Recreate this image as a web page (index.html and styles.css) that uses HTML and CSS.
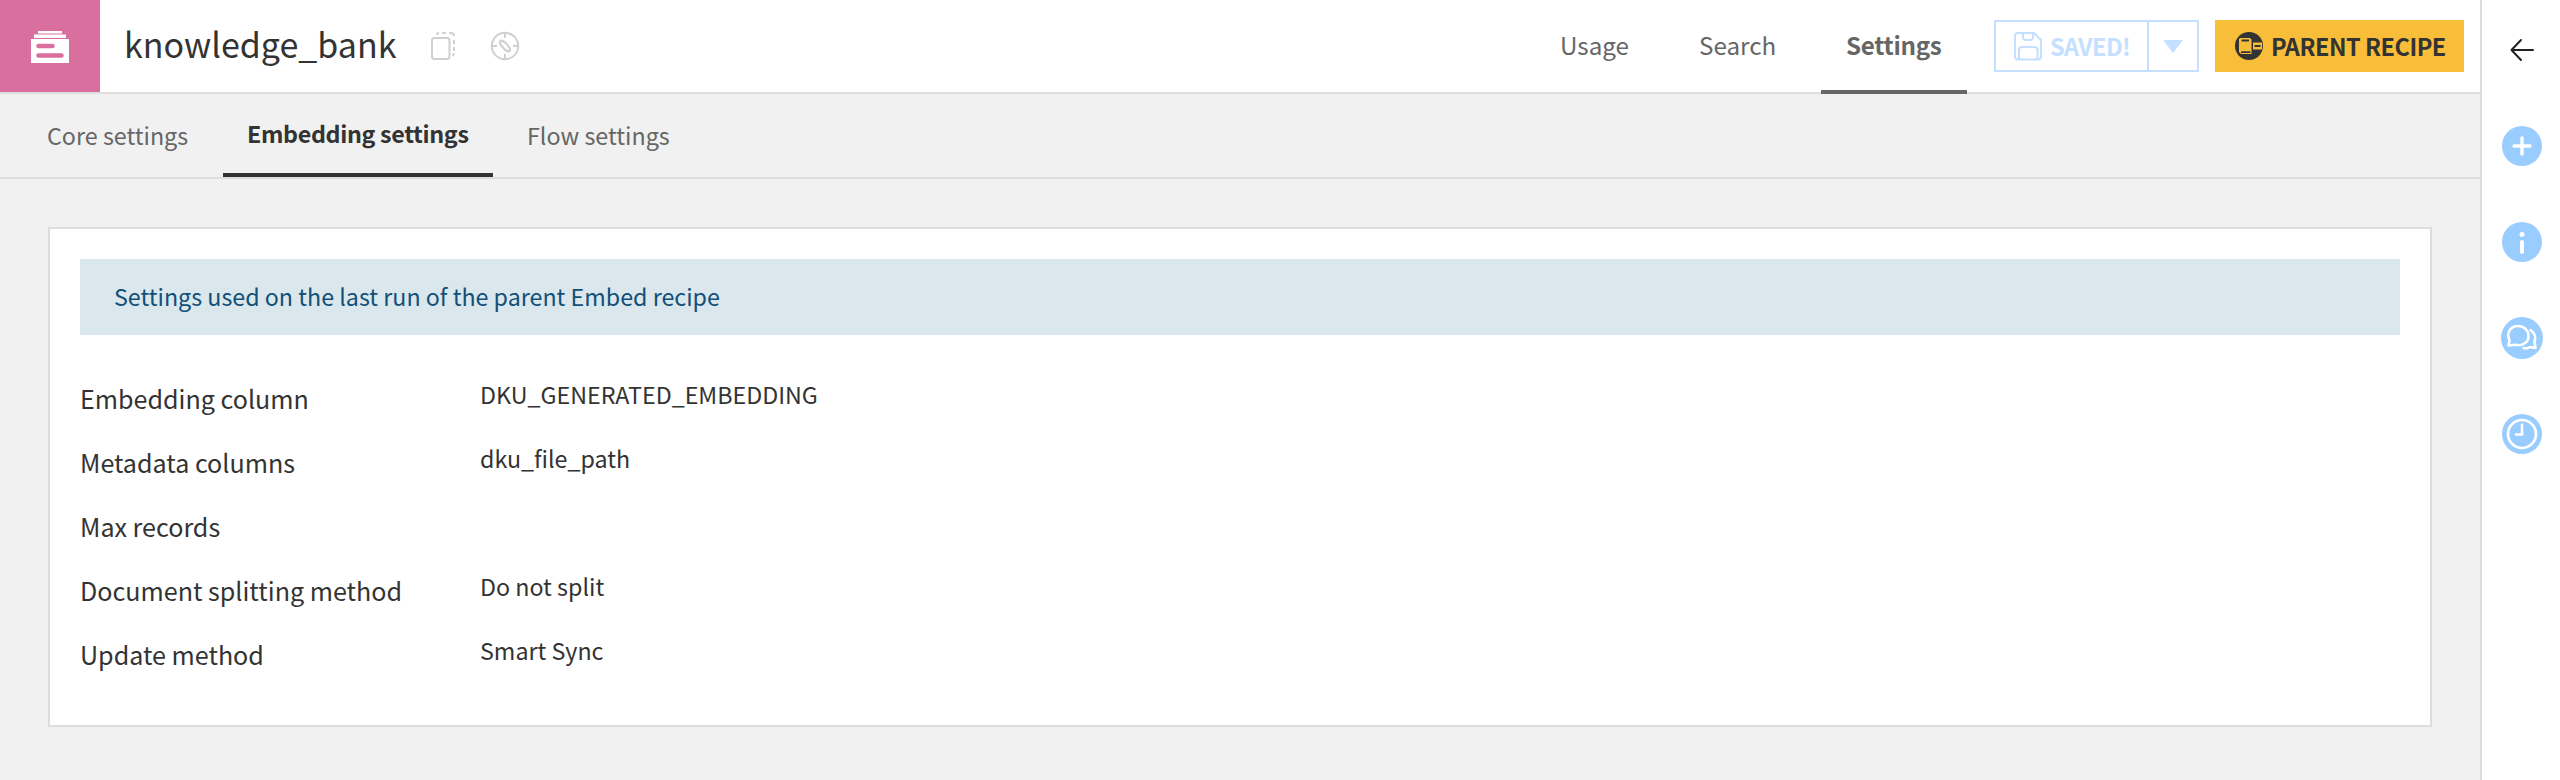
FILE: index.html
```
<!DOCTYPE html>
<html lang="en">
<head>
  <meta charset="UTF-8">
  <title>knowledge_bank</title>
  <meta name="viewport" content="width=device-width, initial-scale=1.0">
  <link rel="stylesheet" href="styles.css">
</head>
<body>

<div class="page">
  <main class="main">
    <header class="topbar">
      <div class="object-type">
        <svg width="38" height="36" viewBox="0 0 38 36">
          <path fill="#fff" d="M7 2h24v2.5H7zM3 5.500h32v3.500H3zM0 10h38v24H0z"/>
          <path stroke="#d86f9f" stroke-width="4.6" stroke-linecap="round" d="M7.5 17h14M7.5 26.500h23"/>
        </svg>
      </div>
      <h1 class="title">knowledge_bank</h1>
      <div class="title-icons">
        <svg width="26" height="32" viewBox="0 0 26 32" fill="none" stroke="#d0d0d0" stroke-width="2">
          <rect x="2" y="8" width="17.500" height="21" rx="2.500"/>
          <path d="M7 5Q7 3 9 3M12 3h4M19 3h1.500Q24 3 24 6M24 10v4M24 17v4M24 23Q24 25 22.500 26"/>
        </svg>
        <svg width="30" height="32" viewBox="0 0 30 32" fill="none" stroke="#d0d0d0" stroke-width="2">
          <circle cx="15" cy="16" r="13.200"/>
          <path d="M15 3v5M15 24v5M2 16h5M23 16h5"/>
          <ellipse cx="15" cy="16" rx="6.800" ry="2.600" transform="rotate(47 15 16)"/>
        </svg>
      </div>

      <nav class="nav">
        <a class="nav-item usage">Usage</a>
        <a class="nav-item search">Search</a>
        <a class="nav-item active">Settings</a>
      </nav>

      <div class="save-group">
        <div class="save">
          <svg width="30" height="30" viewBox="0 0 30 30" fill="none" stroke="#c4dfff" stroke-width="2">
            <path d="M5 2H21L28 9V25Q28 28.500 25 28.500H5Q2 28.500 2 25V5Q2 2 5 2z"/>
            <path d="M10 2v4q0 3 3 3h4q3 0 3-3V2M6 28V19q0-3 3-3h12.500q3 0 3 3v9"/>
          </svg>
          <span>SAVED!</span>
        </div>
        <div class="caret"></div>
      </div>

      <div class="recipe">
        <svg width="28" height="32" viewBox="0 0 28 32">
          <circle cx="14" cy="16" r="14" fill="#333"/>
          <path fill="#f8be3a" d="M5 8h10l1.500 1.500V24H6L4 22V9zM18 12.500h9v7h-9z"/>
          <path stroke="#333" stroke-width="1.800" d="M6.500 10.500h7.500M19.500 16h6M6 22.200h9.500"/>
        </svg>
        <span>PARENT RECIPE</span>
      </div>
    </header>

    <nav class="tabs">
      <a class="tab core">Core settings</a>
      <a class="tab active">Embedding settings</a>
      <a class="tab flow">Flow settings</a>
    </nav>

    <section class="panel">
      <div class="notice">Settings used on the last run of the parent Embed recipe</div>
      <div class="row"><label>Embedding column</label><span>DKU_GENERATED_EMBEDDING</span></div>
      <div class="row"><label>Metadata columns</label><span>dku_file_path</span></div>
      <div class="row"><label>Max records</label><span></span></div>
      <div class="row"><label>Document splitting method</label><span>Do not split</span></div>
      <div class="row"><label>Update method</label><span>Smart Sync</span></div>
    </section>
  </main>

  <aside class="sidebar">
    <svg class="back" width="24" height="24" viewBox="0 0 24 24" fill="none" stroke="#222" stroke-width="2" stroke-linecap="round" stroke-linejoin="round">
      <path d="M23 12H1.500M11 2L1.500 12L11 22"/>
    </svg>
    <svg width="42" height="42" viewBox="0 0 42 42">
      <circle cx="21" cy="21" r="20" fill="#9cf"/>
      <path stroke="#fff" stroke-width="3.400" stroke-linecap="round" d="M13 21h16M21 13v16"/>
    </svg>
    <svg width="42" height="42" viewBox="0 0 42 42">
      <circle cx="21" cy="21" r="20" fill="#9cf"/>
      <circle cx="21" cy="13.500" r="2.500" fill="#fff"/>
      <path stroke="#fff" stroke-width="4" stroke-linecap="round" d="M21 21v10"/>
    </svg>
    <svg width="42" height="42" viewBox="0 0 42 42">
      <circle cx="21" cy="21" r="21" fill="#9cf"/>
      <path fill="none" stroke="#fff" stroke-width="2.600" stroke-linejoin="round" d="M7.500 28.500L8.500 23.500C5 16 9.500 9 17 9C24 9 27.500 14 27.500 19C27.500 25 22 29.500 14.500 27.800z"/>
      <path fill="none" stroke="#fff" stroke-width="2.600" stroke-linecap="round" stroke-linejoin="round" d="M29.500 13C34 16 35 21 33.500 25L34.500 31L29 30Q26 32 22.500 31"/>
    </svg>
    <svg width="42" height="42" viewBox="0 0 42 42">
      <circle cx="21" cy="21" r="20" fill="#9cf"/>
      <circle cx="21" cy="21" r="14" fill="none" stroke="#fff" stroke-width="2.700"/>
      <path fill="none" stroke="#fff" stroke-width="2.600" stroke-linecap="round" d="M21 11.500v10h-6"/>
    </svg>
  </aside>
</div>

</body>
</html>
```
FILE: styles.css
```
* { box-sizing: border-box; }
body {
  margin: 0;
  font-family: "Noto Sans CJK SC", "Noto Sans", sans-serif;
  color: #333;
  background: #f1f1f1;
}
h1 { margin: 0; font-weight: 400; }
svg { display: block; flex: none; }
.page {
  display: flex;
  height: 780px;
  overflow: hidden;
}
.main {
  flex: 1;
  min-width: 0;
}
.topbar {
  display: flex;
  height: 94px;
  background: #fff;
  border-bottom: 2px solid #ddd;
}
.object-type {
  display: flex;
  align-items: center;
  justify-content: center;
  width: 100px;
  height: 92px;
  padding-top: 2px;
  background: #d86f9f;
}
.title {
  width: 330px;
  padding-left: 24px;
  font-size: 34px;
  line-height: 88px;
  white-space: nowrap;
}
.title-icons {
  display: flex;
  gap: 34px;
  padding-top: 30px;
}
.nav {
  display: flex;
  margin-left: auto;
  margin-right: 27px;
}
.nav-item {
  height: 94px;
  padding: 0 25px;
  font-size: 24.2px;
  line-height: 89px;
  color: #666;
  white-space: nowrap;
}
.nav-item.usage { width: 139px; }
.nav-item.search { width: 147px; }
.nav-item.active {
  width: 146px;
  border-bottom: 4px solid #666;
  font-weight: 700;
  letter-spacing: -0.3px;
}
.save-group {
  display: flex;
  width: 205px;
  height: 52px;
  margin-top: 20px;
  border: 2px solid #c4dfff;
}
.save {
  display: flex;
  align-items: center;
  gap: 7px;
  width: 153px;
  padding-left: 17px;
  border-right: 2px solid #c4dfff;
  font-size: 23.5px;
  font-weight: 700;
  letter-spacing: -0.6px;
  line-height: 48px;
  color: #c4dfff;
}
.caret {
  margin: 18px 0 0 14px;
  width: 20px;
  height: 13px;
  background: #c4dfff;
  clip-path: polygon(0 0, 100% 0, 50% 100%);
}
.recipe {
  display: flex;
  align-items: center;
  gap: 8px;
  width: 249px;
  height: 52px;
  margin: 20px 16px 0 16px;
  padding-left: 20px;
  background: #f8be3a;
  font-size: 23.5px;
  font-weight: 700;
  letter-spacing: -0.5px;
  line-height: 48px;
  white-space: nowrap;
}
.tabs {
  display: flex;
  height: 85px;
  border-bottom: 2px solid #ddd;
  padding-left: 47px;
}
.tab {
  font-size: 23.3px;
  line-height: 82px;
  color: #666;
  white-space: nowrap;
}
.tab.core { width: 176px; }
.tab.active {
  width: 270px;
  height: 83px;
  padding-left: 24px;
  border-bottom: 4px solid #333;
  font-weight: 700;
  letter-spacing: -0.35px;
  line-height: 78px;
  color: #333;
}
.tab.flow { padding-left: 34px; }
.panel {
  height: 500px;
  margin: 48px 48px 0;
  padding: 30px;
  background: #fff;
  border: 2px solid #ddd;
}
.notice {
  height: 76px;
  margin-bottom: 32px;
  padding-left: 34px;
  background: #dae7ed;
  font-size: 23.25px;
  line-height: 74px;
  color: #125078;
}
.row {
  display: flex;
  height: 64px;
}
.row label {
  width: 400px;
  font-size: 25.1px;
  line-height: 62px;
}
.row span {
  font-size: 23.25px;
  line-height: 54px;
}
.sidebar {
  display: flex;
  flex-direction: column;
  align-items: center;
  gap: 54px;
  width: 80px;
  padding-top: 38px;
  padding-left: 2px;
  background: #fff;
  border-left: 2px solid #ddd;
}
.sidebar .back { margin-bottom: 9px; }
```
